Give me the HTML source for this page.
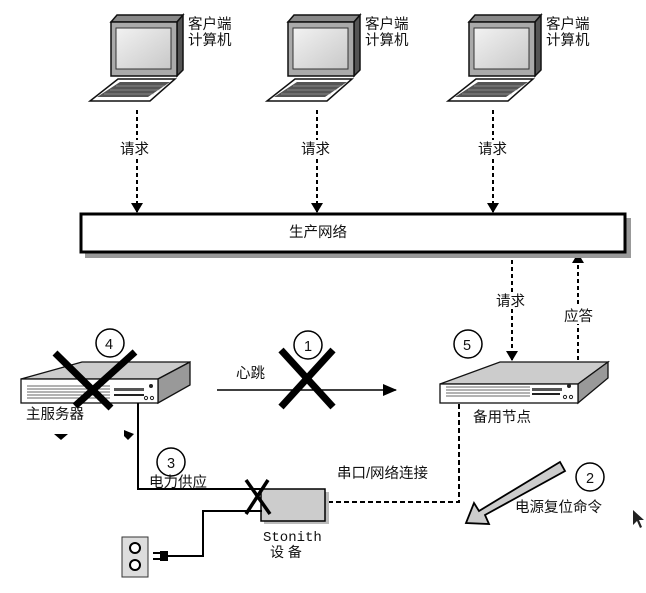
<!DOCTYPE html>
<html><head><meta charset="utf-8"><style>
html,body{margin:0;padding:0;background:#fff;width:646px;height:593px;overflow:hidden}
text{font-family:"Liberation Sans","Noto Sans CJK SC",sans-serif;font-size:14.5px;fill:#111}
</style></head><body>
<svg width="646" height="593" viewBox="0 0 646 593" xmlns="http://www.w3.org/2000/svg">
<defs>
<linearGradient id="scr" x1="0" y1="0" x2="1" y2="1"><stop offset="0" stop-color="#f2f2f2"/><stop offset="1" stop-color="#c8c8c8"/></linearGradient>
<g id="lap">
<polygon points="111,22 117,15 183,15 177,22" fill="#888" stroke="#111" stroke-width="1.5"/>
<polygon points="177,22 183,15 183,70 177,76" fill="#555" stroke="#111" stroke-width="1.5"/>
<rect x="111" y="22" width="66" height="54" fill="#aaa" stroke="#111" stroke-width="1.5"/>
<rect x="116" y="28" width="55" height="41" fill="url(#scr)" stroke="#333"/>
<polygon points="118,79 175,79 150,101 90,101" fill="#fff" stroke="#111" stroke-width="1.5"/>
<polygon points="120,82 170,82 148,97 97,97" fill="#555"/>
<g stroke="#bbb" stroke-width="0.6"><line x1="116" y1="86" x2="166" y2="86"/><line x1="110" y1="90" x2="160" y2="90"/><line x1="104" y1="94" x2="154" y2="94"/></g>
<text x="188" y="29">客户端</text><text x="188" y="45">计算机</text>
</g>
<marker id="ar" markerWidth="10" markerHeight="12" refX="9" refY="6" orient="auto" markerUnits="userSpaceOnUse"><path d="M0,0 L10,6 L0,12z" fill="#000"/></marker>
<marker id="ar2" markerWidth="14" markerHeight="12" refX="13" refY="6" orient="auto" markerUnits="userSpaceOnUse"><path d="M0,0 L14,6 L0,12z" fill="#000"/></marker>
</defs>
<use href="#lap"/>
<use href="#lap" transform="translate(177,0)"/>
<use href="#lap" transform="translate(358,0)"/>
<g stroke="#000" stroke-width="2" stroke-dasharray="4,3" marker-end="url(#ar)">
<line x1="137" y1="110" x2="137" y2="212"/>
<line x1="317" y1="110" x2="317" y2="212"/>
<line x1="493" y1="110" x2="493" y2="212"/>
<line x1="512" y1="253" x2="512" y2="360"/>
<line x1="578" y1="360" x2="578" y2="254"/>
</g>
<g><rect x="118" y="140" width="38" height="17" fill="#fff"/><text x="120" y="154">请求</text>
<rect x="299" y="140" width="38" height="17" fill="#fff"/><text x="301" y="154">请求</text>
<rect x="476" y="140" width="38" height="17" fill="#fff"/><text x="478" y="154">请求</text>
<rect x="494" y="292" width="38" height="17" fill="#fff"/><text x="496" y="306">请求</text>
<rect x="562" y="307" width="38" height="17" fill="#fff"/><text x="564" y="321">应答</text></g>
<rect x="85" y="218" width="546" height="40" fill="#999"/>
<rect x="81" y="214" width="544" height="38" fill="#fff" stroke="#000" stroke-width="3"/>
<text x="289" y="237">生产网络</text>
<!-- left server -->
<polygon points="21,379 82,362 190,362 158,379" fill="#ccc" stroke="#111" stroke-width="1.3"/>
<polygon points="158,379 190,362 190,385 158,403" fill="#999" stroke="#111" stroke-width="1.3"/>
<rect x="21" y="379" width="137" height="24" fill="#fff" stroke="#111" stroke-width="1.3"/>
<g stroke="#666" stroke-width="1"><line x1="27" y1="386" x2="110" y2="386"/><line x1="27" y1="389" x2="110" y2="389"/><line x1="27" y1="392" x2="110" y2="392"/><line x1="27" y1="395" x2="110" y2="395"/><line x1="27" y1="398" x2="110" y2="398"/></g>
<rect x="114" y="388" width="30" height="3" fill="#555"/><rect x="114" y="394" width="30" height="2" fill="#222"/>
<circle cx="151" cy="386" r="2" fill="#222"/><circle cx="146" cy="398" r="1.6" fill="none" stroke="#222"/><circle cx="152" cy="398" r="1.6" fill="none" stroke="#222"/>
<g stroke="#000" stroke-width="7"><line x1="55" y1="353" x2="111" y2="408"/><line x1="135" y1="352" x2="75" y2="406"/></g>
<circle cx="110" cy="343" r="14" fill="#fff" stroke="#000" stroke-width="1.5"/><text x="105" y="349">4</text>
<text x="26" y="419">主服务器</text>
<path d="M54,434 L68,434 L61,440z" fill="#000"/><path d="M124,430 L134,434 L128,440 L124,436z" fill="#000"/>
<!-- heartbeat -->
<line x1="217" y1="390" x2="396" y2="390" stroke="#000" stroke-width="1.5" marker-end="url(#ar2)"/>
<text x="236" y="378">心跳</text>
<g stroke="#000" stroke-width="7"><line x1="281" y1="350" x2="333" y2="407"/><line x1="333" y1="350" x2="281" y2="407"/></g>
<circle cx="308" cy="345" r="14" fill="#fff" stroke="#000" stroke-width="1.5"/><text x="304" y="351">1</text>
<!-- right server -->
<polygon points="440,384 500,362 608,362 578,384" fill="#ccc" stroke="#111" stroke-width="1.3"/>
<polygon points="578,384 608,362 608,378 578,403" fill="#999" stroke="#111" stroke-width="1.3"/>
<rect x="440" y="384" width="138" height="19" fill="#fff" stroke="#111" stroke-width="1.3"/>
<g stroke="#666"><line x1="446" y1="387" x2="530" y2="387"/><line x1="446" y1="390" x2="530" y2="390"/><line x1="446" y1="393" x2="530" y2="393"/><line x1="446" y1="396" x2="530" y2="396"/></g>
<rect x="532" y="388" width="30" height="3" fill="#555"/><rect x="532" y="393" width="28" height="2" fill="#222"/>
<circle cx="569" cy="386" r="2" fill="#222"/><circle cx="565" cy="397" r="1.6" fill="none" stroke="#222"/><circle cx="571" cy="397" r="1.6" fill="none" stroke="#222"/>
<circle cx="468" cy="344" r="14" fill="#fff" stroke="#000" stroke-width="1.5"/><text x="463" y="350">5</text>
<text x="473" y="422">备用节点</text>
<!-- serial dashed -->
<path d="M459,404 L459,502 L326,502" fill="none" stroke="#000" stroke-width="2" stroke-dasharray="5,3"/>
<text x="337" y="478">串口/网络连接</text>
<circle cx="590" cy="477" r="14" fill="#fff" stroke="#000" stroke-width="1.5"/><text x="586" y="483">2</text>
<path d="M560,462 L565,471 L485,515 L489,524 L466,523 L474,503 L479,511 L555,465z" fill="#ccc" stroke="#000" stroke-width="1.8"/>
<text x="515" y="512">电源复位命令</text>
<path d="M633,510 L633,525 L637,521 L640,528 L642,527 L639,520 L644,520z" fill="#222"/>
<!-- power -->
<path d="M138,403 L138,489 L262,489" fill="none" stroke="#000" stroke-width="2"/>
<circle cx="171" cy="462" r="14" fill="#fff" stroke="#000" stroke-width="1.5"/><text x="167" y="468">3</text>
<text x="149" y="487">电力供应</text>
<rect x="264" y="492" width="65" height="32" fill="#bbb"/>
<rect x="261" y="489" width="64" height="32" fill="#ccc" stroke="#000" stroke-width="1.5"/>
<path d="M262,511 L203,511 L203,556 L168,556" fill="none" stroke="#000" stroke-width="2"/>
<rect x="160" y="551" width="8" height="10" fill="#000"/><line x1="153" y1="553" x2="160" y2="553" stroke="#000" stroke-width="2"/><line x1="153" y1="559" x2="160" y2="559" stroke="#000" stroke-width="2"/>
<rect x="122" y="537" width="26" height="40" fill="#ddd" stroke="#333"/>
<circle cx="135" cy="548" r="5" fill="#fff" stroke="#000" stroke-width="2"/><circle cx="135" cy="565" r="5" fill="#fff" stroke="#000" stroke-width="2"/>
<g stroke="#000" stroke-width="3.5"><line x1="246" y1="480" x2="270" y2="514"/><line x1="268" y1="480" x2="246" y2="514"/></g>
<text x="263" y="541" style="font-family:'Liberation Mono',monospace;font-size:14px">Stonith</text>
<text x="270" y="557" style="font-size:14px">设 备</text>
</svg>
</body></html>
